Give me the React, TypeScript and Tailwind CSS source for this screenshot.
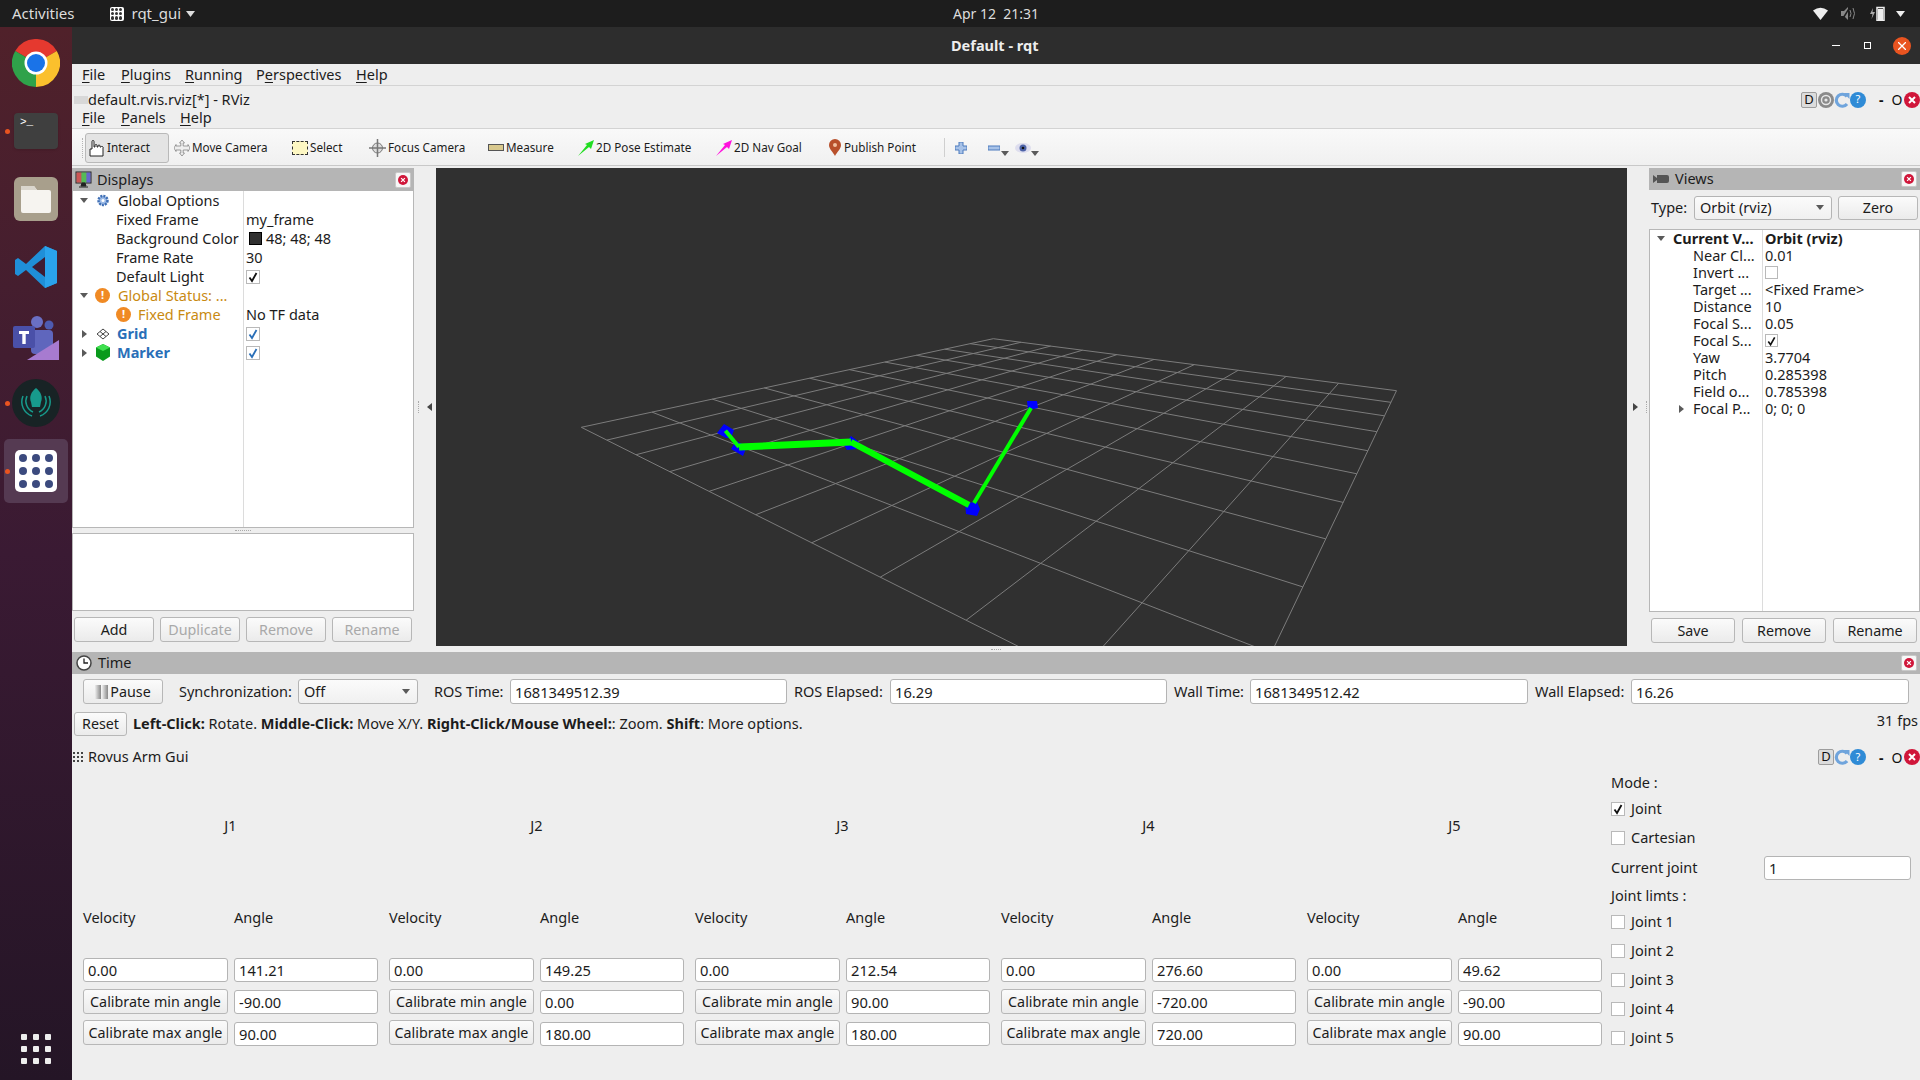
import type { ReactNode } from "react";

const font = "font-['Noto_Sans','Liberation_Sans',sans-serif]";

// Square-to-quad projection for the rviz grid (corners read off the screenshot)
const quad = [
	[581.3, 427.3],
	[993.3, 338.7],
	[1396.5, 390.7],
	[1225, 750],
];

function project(u: number, v: number): [number, number] {
	const [[x0, y0], [x1, y1], [x2, y2], [x3, y3]] = quad;
	const dx1 = x1 - x2;
	const dx2 = x3 - x2;
	const sx = x0 - x1 + x2 - x3;
	const dy1 = y1 - y2;
	const dy2 = y3 - y2;
	const sy = y0 - y1 + y2 - y3;
	const den = dx1 * dy2 - dx2 * dy1;
	const g = (sx * dy2 - dx2 * sy) / den;
	const h = (dx1 * sy - sx * dy1) / den;
	const a = x1 - x0 + g * x1;
	const b = x3 - x0 + h * x3;
	const d = y1 - y0 + g * y1;
	const e = y3 - y0 + h * y3;
	const w = g * u + h * v + 1;
	return [(a * u + b * v + x0) / w, (d * u + e * v + y0) / w];
}

function gridLines() {
	const lines: [number, number, number, number][] = [];
	for (let i = 0; i <= 10; i++) {
		const t = i / 10;
		lines.push([...project(t, 0), ...project(t, 1)]);
		lines.push([...project(0, t), ...project(1, t)]);
	}
	return lines;
}

const markers = [
	"717,433 724,424 734,430 731,438 726,438",
	"731,449 736,441 747,446 743,456",
	"844,445 851,436 859,442 856,449 847,450",
	"965,503 977,502 980,509 977,516 966,514",
	"1027,401 1037,401 1038,408 1028,410",
];

function Scene() {
	return (
		<svg className="h-full w-full" viewBox="436 168 1191 478">
			{gridLines().map(([x1, y1, x2, y2]) => (
				<line
					key={`${x1}-${y1}`}
					stroke="#7c7c7c"
					strokeWidth="1"
					x1={x1}
					x2={x2}
					y1={y1}
					y2={y2}
				/>
			))}
			{markers.map((points) => (
				<polygon fill="#0000ff" key={points} points={points} />
			))}
			<g stroke="#00ff00">
				<line strokeWidth="4" x1="725.4" x2="739" y1="430.7" y2="447" />
				<line strokeWidth="7" x1="739" x2="851" y1="447" y2="442" />
				<line strokeWidth="6" x1="851" x2="969" y1="442" y2="505" />
				<line strokeWidth="4" x1="974" x2="1031" y1="503" y2="408" />
			</g>
		</svg>
	);
}

function CloseDot({ size = "h-[16px] w-[16px]" }: { size?: string }) {
	return (
		<svg className={size} viewBox="0 0 16 16">
			<circle cx="8" cy="8" fill="#d0163a" r="8" />
			<path d="M5 5l6 6M11 5l-6 6" stroke="#fff" strokeWidth="2" />
		</svg>
	);
}

function PanelClose() {
	return (
		<span className="flex h-[16px] w-[16px] items-center justify-center rounded-[2px] border border-[#c9c9c9] bg-[#f7f7f7]">
			<CloseDot size="h-[10px] w-[10px]" />
		</span>
	);
}

function Triangle({ dir, color = "#5a5a5a" }: { dir: "down" | "right" | "left"; color?: string }) {
	const d = { down: "M0 1h8L4 6z", right: "M2 0l5 4-5 4z", left: "M7 0L2 4l5 4z" }[dir];
	return (
		<svg className="h-[8px] w-[8px] shrink-0" viewBox="0 0 8 8">
			<path d={d} fill={color} />
		</svg>
	);
}

function Check({ checked, color = "#111", box = "h-[14px] w-[14px]" }: { checked?: boolean; color?: string; box?: string }) {
	return (
		<span className={`flex shrink-0 items-center justify-center border border-[#b9b9b9] bg-white ${box}`}>
			{checked && (
				<svg className="h-[12px] w-[12px]" viewBox="0 0 12 12">
					<path d="M2.5 6.5L5 10l4.5-8" fill="none" stroke={color} strokeWidth="1.8" />
				</svg>
			)}
		</span>
	);
}

function Btn({ children, className = "", muted }: { children: ReactNode; className?: string; muted?: boolean }) {
	return (
		<button
			className={`flex items-center justify-center rounded-[3px] border border-[#b7b7b7] bg-gradient-to-b from-[#fbfbfb] to-[#ebebeb] text-[14.3px] ${muted ? "text-[#a9a9a9]" : "text-[#1c1c1c]"} ${className}`}
			type="button"
		>
			{children}
		</button>
	);
}

function Field({ value, className = "" }: { value: string; className?: string }) {
	return (
		<input
			className={`rounded-[3px] border border-[#b4b4b4] bg-white px-[4px] text-[14.7px] text-[#1c1c1c] outline-none ${font} ${className}`}
			readOnly
			type="text"
			value={value}
		/>
	);
}

function Combo({ value, className = "" }: { value: string; className?: string }) {
	return (
		<div className={`flex items-center justify-between rounded-[3px] border border-[#b4b4b4] bg-gradient-to-b from-[#fbfbfb] to-[#f0f0f0] pr-[7px] pl-[5px] ${className}`}>
			<span>{value}</span>
			<Triangle dir="down" />
		</div>
	);
}

function Under({ pre = "", u, post }: { pre?: string; u: string; post: string }) {
	return (
		<span>
			{pre}
			<span className="underline underline-offset-2">{u}</span>
			{post}
		</span>
	);
}

function HelpDot() {
	return (
		<span className="flex h-[16px] w-[16px] items-center justify-center rounded-full bg-[#2f8bd6] text-[11px] text-white">?</span>
	);
}

function RefreshDot() {
	return (
		<svg className="h-[16px] w-[16px]" viewBox="0 0 16 16">
			<path d="M13 4.5A6 6 0 1 0 13 12" fill="none" stroke="#6fa4dc" strokeWidth="3.2" />
			<path d="M9.5 1h6v6z" fill="#6fa4dc" />
		</svg>
	);
}

function WindowControls({ gear }: { gear?: boolean }) {
	return (
		<div className="flex items-center">
			<span className="flex h-[16px] w-[16px] items-center justify-center rounded-[2px] border border-[#9d9d9d] bg-[#dcdcdc] text-[13px] text-[#111]">D</span>
			{gear && (
				<svg className="ml-[1px] h-[16px] w-[16px]" viewBox="0 0 16 16">
					<circle cx="8" cy="8" fill="#8a8a8a" r="8" />
					<circle cx="8" cy="8" fill="none" r="4.5" stroke="#e8e8e8" strokeWidth="1.4" />
					<circle cx="8" cy="8" fill="#e8e8e8" r="1.6" />
				</svg>
			)}
			<RefreshDot />
			<HelpDot />
			<span className="ml-[13px] w-[10px] text-[14px] font-bold text-[#111]">-</span>
			<span className="ml-[2px] w-[12px] text-center text-[14px] text-[#111]">O</span>
			<CloseDot size="ml-[1px] h-[16px] w-[16px]" />
		</div>
	);
}

function ToolItem({ icon, label, className }: { icon: ReactNode; label: string; className: string }) {
	return (
		<div className={`flex h-[30px] shrink-0 items-center ${className}`}>
			{icon}
			<span className="ml-[2px] text-[11.7px]">{label}</span>
		</div>
	);
}

function Arrow({ color }: { color: string }) {
	return (
		<svg className="h-[16px] w-[16px]" viewBox="0 0 16 16">
			<path d="M0 16L9 5 7 4l9-4-3 9-2-2z" fill={color} />
		</svg>
	);
}

function Toolbar() {
	return (
		<div className="flex h-[37px] items-center border-b border-[#c8c8c8] bg-gradient-to-b from-[#f9f9f9] to-[#f0f0f0] pt-[1px] pl-[10px] text-[#1c1c1c]">
			<span className="mt-[1px] h-[20px] w-[3px] border-l border-dotted border-[#b5b5b5]" />
			<ToolItem
				className="w-[84px] rounded-[3px] border border-[#b9b9b9] bg-[#e4e4e4] pl-[3px]"
				icon={
					<svg className="h-[18px] w-[16px]" viewBox="0 0 16 18">
						<path d="M1 17V10h2V2.5a1 1 0 0 1 2 0V8h1V6.5a1 1 0 0 1 2 0V8h1V7a1 1 0 0 1 2 0v1h1a1 1 0 0 1 2 1v8z" fill="#fff" stroke="#222" />
					</svg>
				}
				label="Interact"
			/>
			<ToolItem
				className="ml-[3px] w-[116px] pl-[2px]"
				icon={
					<svg className="h-[18px] w-[16px]" viewBox="0 0 16 18">
						<path d="M8 1l2.5 3H9.2v3H14V5.5L16 9l-2 3.5V11H9.2v3h1.3L8 17l-2.5-3h1.3v-3H2v1.500L0 9l2-3.500V7h4.800V4H5.500z" fill="#eee" stroke="#777" strokeWidth=".7" />
					</svg>
				}
				label="Move Camera"
			/>
			<ToolItem
				className="w-[77px] pl-[4px]"
				icon={<span className="h-[14px] w-[16px] border border-dashed border-[#333] bg-[#fdf7c3]" />}
				label="Select"
			/>
			<ToolItem
				className="w-[119px] pl-[4px]"
				icon={
					<svg className="h-[18px] w-[17px]" viewBox="0 0 17 18">
						<circle cx="8.500" cy="9" fill="#ddd" r="5" stroke="#777" />
						<path d="M8.500 0v18M0 9h17" stroke="#777" strokeWidth="1.500" />
					</svg>
				}
				label="Focus Camera"
			/>
			<ToolItem
				className="w-[90px] pl-[4px]"
				icon={<span className="flex h-[7px] w-[16px] border border-[#555] bg-[#d9c98e]" />}
				label="Measure"
			/>
			<ToolItem className="w-[138px] pl-[4px]" icon={<Arrow color="#22dd22" />} label="2D Pose Estimate" />
			<ToolItem className="w-[112px] pl-[4px]" icon={<Arrow color="#ff11dd" />} label="2D Nav Goal" />
			<ToolItem
				className="w-[100px] pl-[4px]"
				icon={
					<svg className="h-[17px] w-[14px]" viewBox="0 0 14 17">
						<path d="M7 0a6 6 0 0 1 6 6c0 4-4 7-6 11-2-4-6-7-6-11a6 6 0 0 1 6-6z" fill="#b8502b" />
						<circle cx="7" cy="6" fill="#f0c0a0" r="2" />
					</svg>
				}
				label="Publish Point"
			/>
			<span className="ml-[20px] h-[19px] w-[1px] bg-[#cfcfcf]" />
			<svg className="ml-[10px] h-[12px] w-[12px]" viewBox="0 0 12 12">
				<path d="M4 0h4v4h4v4H8v4H4V8H0V4h4z" fill="#a7c2e8" stroke="#4d7bbd" />
			</svg>
			<svg className="ml-[21px] h-[12px] w-[12px]" viewBox="0 0 12 12">
				<rect fill="#a7c2e8" height="4" stroke="#4d7bbd" width="12" y="4" />
			</svg>
			<span className="mt-[12px] ml-[1px]">
				<Triangle dir="down" />
			</span>
			<svg className="ml-[6px] h-[12px] w-[16px]" viewBox="0 0 16 12">
				<ellipse cx="8" cy="6" fill="#dde" rx="8" ry="5" />
				<circle cx="8" cy="6" fill="#4d63a8" r="3.500" />
				<circle cx="8" cy="6" fill="#111" r="1.300" />
			</svg>
			<span className="mt-[12px]">
				<Triangle dir="down" />
			</span>
		</div>
	);
}

function PanelHeader({ icon, title, className = "" }: { icon: ReactNode; title: string; className?: string }) {
	return (
		<div className={`flex items-center justify-between bg-[#b5b5b5] pr-[3px] ${className}`}>
			<div className="flex items-center">
				{icon}
				<span>{title}</span>
			</div>
			<PanelClose />
		</div>
	);
}

function DisplayRow({ children, className = "" }: { children: ReactNode; className?: string }) {
	return <div className={`flex h-[19px] items-center whitespace-nowrap ${className}`}>{children}</div>;
}

function WarnIcon({ className = "" }: { className?: string }) {
	return (
		<span className={`flex h-[15px] w-[15px] shrink-0 items-center justify-center rounded-full bg-[#f08a24] text-[11px] font-bold text-white ${className}`}>!</span>
	);
}

function Displays() {
	const top = "pl-[7px]";
	return (
		<div className="flex w-[342px] shrink-0 flex-col">
			<PanelHeader
				className="h-[23px]"
				icon={
					<svg className="mr-[5px] ml-[3px] h-[17px] w-[17px]" viewBox="0 0 17 17">
						<rect fill="#7f7f7f" height="11" stroke="#222" width="15" x="1" y="1" />
						<rect fill="#c55" height="10" width="5" x="1.500" y="1.500" />
						<rect fill="#5b5" height="10" width="5" x="6.500" y="1.500" />
						<rect fill="#66c" height="10" width="4" x="11.500" y="1.500" />
						<path d="M6 15h5l-1-3H7zM4 16h9" fill="#222" stroke="#222" />
					</svg>
				}
				title="Displays"
			/>
			<div className="flex h-[337px] border-x border-b border-[#b7b7b7] bg-white">
				<div className="w-[171px] border-r border-[#dcdcdc]">
					<DisplayRow className={top}>
						<Triangle dir="down" />
						<svg className="mr-[8px] ml-[8px] h-[15px] w-[14px]" viewBox="0 0 14 15">
							<circle cx="7" cy="7.500" fill="#9dbbe6" r="4.500" stroke="#3f6fb5" strokeDasharray="2 1" strokeWidth="2.500" />
							<circle cx="7" cy="7.500" fill="#fff" r="1.500" />
						</svg>
						Global Options
					</DisplayRow>
					<DisplayRow className="pl-[43px]">Fixed Frame</DisplayRow>
					<DisplayRow className="pl-[43px]">Background Color</DisplayRow>
					<DisplayRow className="pl-[43px]">Frame Rate</DisplayRow>
					<DisplayRow className="pl-[43px]">Default Light</DisplayRow>
					<DisplayRow className={`${top} text-[#c98a12]`}>
						<Triangle dir="down" />
						<WarnIcon className="mr-[8px] ml-[7px]" />
						Global Status: ...
					</DisplayRow>
					<DisplayRow className="pl-[43px] text-[#c98a12]">
						<WarnIcon className="mr-[7px]" />
						Fixed Frame
					</DisplayRow>
					<DisplayRow className={`${top} font-bold text-[#2a6fb8]`}>
						<Triangle dir="right" />
						<svg className="mr-[7px] ml-[8px] h-[12px] w-[14px]" viewBox="0 0 14 12">
							<path d="M7 1l6 5-6 5-6-5zM4 3.500l6 5M10 3.500l-6 5" fill="none" stroke="#444" />
						</svg>
						Grid
					</DisplayRow>
					<DisplayRow className={`${top} font-bold text-[#2a6fb8]`}>
						<Triangle dir="right" />
						<svg className="mr-[7px] ml-[8px] h-[17px] w-[14px]" viewBox="0 0 14 17">
							<path d="M7 0l7 3.500v9L7 17l-7-4.500v-9z" fill="#0a9a1c" />
							<path d="M7 0l7 3.500L7 7 0 3.500z" fill="#3fe04f" />
						</svg>
						Marker
					</DisplayRow>
				</div>
				<div className="flex-1 pl-[2px]">
					<DisplayRow> </DisplayRow>
					<DisplayRow>my_frame</DisplayRow>
					<DisplayRow>
						<span className="mr-[4px] ml-[3px] h-[13px] w-[13px] border border-black bg-[#303030]" />
						48; 48; 48
					</DisplayRow>
					<DisplayRow>30</DisplayRow>
					<DisplayRow>
						<Check checked />
					</DisplayRow>
					<DisplayRow> </DisplayRow>
					<DisplayRow>No TF data</DisplayRow>
					<DisplayRow>
						<Check checked color="#2a6fb8" />
					</DisplayRow>
					<DisplayRow>
						<Check checked color="#2a6fb8" />
					</DisplayRow>
				</div>
			</div>
			<div className="flex h-[5px] items-center justify-center">
				<span className="h-0 w-[16px] border-t border-dotted border-[#aaa]" />
			</div>
			<div className="h-[78px] border border-[#b7b7b7] bg-white" />
			<div className="mt-[6px] flex gap-[6px] pl-[2px]">
				<Btn className="h-[25px] w-[80px]">Add</Btn>
				<Btn className="h-[25px] w-[80px]" muted>Duplicate</Btn>
				<Btn className="h-[25px] w-[80px]" muted>Remove</Btn>
				<Btn className="h-[25px] w-[80px]" muted>Rename</Btn>
			</div>
		</div>
	);
}

const viewRows: { label: string; value?: string; check?: boolean; checked?: boolean; arrow?: boolean }[] = [
	{ label: "Near Cl...", value: "0.01" },
	{ label: "Invert ...", check: true },
	{ label: "Target ...", value: "<Fixed Frame>" },
	{ label: "Distance", value: "10" },
	{ label: "Focal S...", value: "0.05" },
	{ label: "Focal S...", check: true, checked: true },
	{ label: "Yaw", value: "3.7704" },
	{ label: "Pitch", value: "0.285398" },
	{ label: "Field o...", value: "0.785398" },
	{ label: "Focal P...", value: "0; 0; 0", arrow: true },
];

function Views() {
	return (
		<div className="flex w-[271px] shrink-0 flex-col">
			<PanelHeader
				className="h-[22px]"
				icon={
					<svg className="mr-[6px] ml-[4px] h-[10px] w-[16px]" viewBox="0 0 16 10">
						<path d="M0 1l4 3V1h10a2 2 0 0 1 2 2v4a2 2 0 0 1-2 2H4V6L0 9z" fill="#555" />
					</svg>
				}
				title="Views"
			/>
			<div className="mt-[6px] flex h-[24px] items-center pl-[2px]">
				<span className="w-[43px]">Type:</span>
				<Combo className="h-[24px] w-[138px]" value="Orbit (rviz)" />
				<Btn className="ml-[6px] h-[24px] w-[80px]">Zero</Btn>
			</div>
			<div className="mt-[9px] flex h-[383px] border border-[#b7b7b7] bg-white">
				<div className="w-[113px] border-r border-[#dcdcdc] whitespace-nowrap">
					<div className="flex h-[17px] items-center pl-[7px] font-bold">
						<Triangle dir="down" />
						<span className="ml-[8px]">Current V...</span>
					</div>
					{viewRows.map((row, i) => (
						<div className="flex h-[17px] items-center pl-[43px]" key={`${row.label}-${i}`}>
							{row.arrow && (
								<span className="-ml-[16px] w-[16px]">
									<Triangle dir="right" />
								</span>
							)}
							{row.label}
						</div>
					))}
				</div>
				<div className="flex-1 pl-[2px]">
					<div className="flex h-[17px] items-center font-bold">Orbit (rviz)</div>
					{viewRows.map((row, i) => (
						<div className="flex h-[17px] items-center" key={`${row.label}-v-${i}`}>
							{row.check ? <Check box="h-[13px] w-[13px]" checked={row.checked} /> : row.value}
						</div>
					))}
				</div>
			</div>
			<div className="mt-[6px] flex gap-[7px] pl-[2px]">
				<Btn className="h-[25px] w-[84px]">Save</Btn>
				<Btn className="h-[25px] w-[84px]">Remove</Btn>
				<Btn className="h-[25px] w-[84px]">Rename</Btn>
			</div>
		</div>
	);
}

function TimePanel() {
	return (
		<div className="flex flex-col">
			<PanelHeader
				className="h-[22px]"
				icon={
					<svg className="mr-[6px] ml-[4px] h-[16px] w-[16px]" viewBox="0 0 16 16">
						<circle cx="8" cy="8" fill="#fff" r="7" stroke="#444" strokeWidth="1.500" />
						<path d="M8 3.500V8h4" fill="none" stroke="#222" strokeWidth="1.300" />
					</svg>
				}
				title="Time"
			/>
			<div className="mt-[5px] flex h-[25px] items-center pl-[11px] whitespace-nowrap">
				<Btn className="h-[25px] w-[80px]">
					<span className="mr-[2px] flex gap-[1px]">
						<span className="h-[14px] w-[6px] bg-gradient-to-r from-[#eee] to-[#888]" />
						<span className="h-[14px] w-[6px] bg-gradient-to-r from-[#eee] to-[#888]" />
					</span>
					Pause
				</Btn>
				<span className="ml-[16px] w-[119px]">Synchronization:</span>
				<Combo className="h-[25px] w-[120px]" value="Off" />
				<span className="ml-[16px] w-[76px]">ROS Time:</span>
				<Field className="h-[25px] w-[277px]" value="1681349512.39" />
				<span className="ml-[7px] w-[96px]">ROS Elapsed:</span>
				<Field className="h-[25px] w-[277px]" value="16.29" />
				<span className="ml-[7px] w-[76px]">Wall Time:</span>
				<Field className="h-[25px] w-[278px]" value="1681349512.42" />
				<span className="ml-[7px] w-[96px]">Wall Elapsed:</span>
				<Field className="h-[25px] w-[278px]" value="16.26" />
			</div>
			<div className="mt-[8px] flex h-[24px] items-center pl-[2px] whitespace-nowrap">
				<Btn className="h-[24px] w-[53px]">Reset</Btn>
				<span className="ml-[6px]">
					<b>Left-Click:</b> Rotate. <b>Middle-Click:</b> Move X/Y. <b>Right-Click/Mouse Wheel:</b>: Zoom. <b>Shift</b>: More options.
				</span>
				<span className="-mt-[6px] ml-auto pr-[2px]">31 fps</span>
			</div>
		</div>
	);
}

const joints = [
	{ name: "J1", angle: "141.21", min: "-90.00", max: "90.00" },
	{ name: "J2", angle: "149.25", min: "0.00", max: "180.00" },
	{ name: "J3", angle: "212.54", min: "90.00", max: "180.00" },
	{ name: "J4", angle: "276.60", min: "-720.00", max: "720.00" },
	{ name: "J5", angle: "49.62", min: "-90.00", max: "90.00" },
];

function JointColumn({ name, angle, min, max }: (typeof joints)[number]) {
	return (
		<div className="flex w-[295px] shrink-0 flex-col">
			<div className="mt-[49px] flex h-[20px] items-center justify-center">{name}</div>
			<div className="mt-[71px] grid h-[20px] grid-cols-[145px_144px] items-center gap-x-[6px]">
				<span>Velocity</span>
				<span>Angle</span>
			</div>
			<div className="mt-[31px] grid grid-cols-[145px_144px] gap-x-[6px]">
				<Field className="h-[24px] w-full" value="0.00" />
				<Field className="h-[24px] w-full" value={angle} />
			</div>
			<div className="mt-[7px] grid grid-cols-[145px_144px] gap-x-[6px]">
				<Btn className="h-[25px] w-full whitespace-nowrap">Calibrate min angle</Btn>
				<Field className="mt-[1px] h-[24px] w-full" value={min} />
			</div>
			<div className="mt-[6px] grid grid-cols-[145px_144px] gap-x-[6px]">
				<Btn className="h-[25px] w-full whitespace-nowrap">Calibrate max angle</Btn>
				<Field className="mt-[2px] h-[24px] w-full" value={max} />
			</div>
		</div>
	);
}

function CheckRow({ label, checked, className }: { label: string; checked?: boolean; className: string }) {
	return (
		<div className={`flex h-[20px] items-center gap-[6px] ${className}`}>
			<Check checked={checked} />
			{label}
		</div>
	);
}

function ArmGui() {
	return (
		<div className="flex min-h-0 flex-1 flex-col">
			<div className="flex h-[20px] items-center justify-between">
				<div className="flex items-center">
					<span className="mr-[1px] ml-[1px] grid grid-cols-3 gap-[2px]">
						{[0, 1, 2, 3, 4, 5, 6, 7, 8].map((n) => (
							<span className="h-[2px] w-[2px] bg-[#444]" key={n} />
						))}
					</span>
					<span className="ml-[4px]">Rovus Arm Gui</span>
				</div>
				<WindowControls />
			</div>
			<div className="flex pl-[11px]">
				<div className="flex gap-[11px]">
					{joints.map((joint) => (
						<JointColumn key={joint.name} {...joint} />
					))}
				</div>
				<div className="ml-[9px] flex w-[300px] flex-col">
					<div className="mt-[6px] flex h-[20px] items-center">Mode :</div>
					<CheckRow checked className="mt-[6px]" label="Joint" />
					<CheckRow className="mt-[9px]" label="Cartesian" />
					<div className="mt-[8px] flex h-[24px] items-center justify-between">
						<span>Current joint</span>
						<Field className="h-[24px] w-[147px]" value="1" />
					</div>
					<div className="mt-[6px] flex h-[20px] items-center">Joint limts :</div>
					<CheckRow className="mt-[6px]" label="Joint 1" />
					<CheckRow className="mt-[9px]" label="Joint 2" />
					<CheckRow className="mt-[9px]" label="Joint 3" />
					<CheckRow className="mt-[9px]" label="Joint 4" />
					<CheckRow className="mt-[9px]" label="Joint 5" />
				</div>
			</div>
		</div>
	);
}

function TopBar() {
	return (
		<div className="relative flex h-[27px] shrink-0 items-center bg-[#1d1d1d] pl-[12px] text-[15px] text-[#dcdcdc]">
			<span>Activities</span>
			<span className="ml-[35px] grid h-[14px] w-[14px] grid-cols-3 gap-[1px] rounded-[2px] bg-white p-[1px]">
				{[0, 1, 2, 3, 4, 5, 6, 7, 8].map((n) => (
					<span className="rounded-full bg-[#333]" key={n} />
				))}
			</span>
			<span className="ml-[8px]">rqt_gui</span>
			<svg className="ml-[5px] h-[6px] w-[9px]" viewBox="0 0 9 6">
				<path d="M0 0h9L4.500 6z" fill="#ddd" />
			</svg>
			<span className="absolute left-[953px] text-[14px] whitespace-pre">Apr 12  21:31</span>
			<div className="ml-auto flex items-center pr-[15px]">
				<svg className="h-[13px] w-[15px]" viewBox="0 0 15 13">
					<path d="M0 3.500Q7.500-2 15 3.500L7.500 13z" fill="#eee" />
				</svg>
				<svg className="ml-[13px] h-[13px] w-[15px]" viewBox="0 0 15 13">
					<path d="M0 4h3l4-4v13l-4-4H0z" fill="#888" />
					<path d="M9 3q2 3.500 0 7M12 1q3 5.500 0 11" fill="none" stroke="#888" />
					<path d="M1 13L9 0" stroke="#1d1d1d" strokeWidth="1.500" />
				</svg>
				<svg className="ml-[14px] h-[15px] w-[15px]" viewBox="0 0 15 15">
					<path d="M3 2L0 8h2.500L1.500 13l3.500-7H2.500z" fill="#aaa" />
					<rect fill="#1d1d1d" height="13" stroke="#eee" strokeWidth="1.500" width="7" x="7" y="1.500" />
					<rect fill="#eee" height="11" width="5" x="8" y="3" />
				</svg>
				<svg className="ml-[11px] h-[6px] w-[9px]" viewBox="0 0 9 6">
					<path d="M0 0h9L4.500 6z" fill="#eee" />
				</svg>
			</div>
		</div>
	);
}

function Dock() {
	return (
		<div className="relative flex w-[72px] shrink-0 flex-col items-center bg-gradient-to-b from-[#50212a] via-[#3a1a33] to-[#241526]">
			<svg className="mt-[12px] h-[48px] w-[48px]" viewBox="0 0 48 48">
				<path d="M24 24L44.800 12A24 24 0 0 0 3.200 12z" fill="#e5392f" />
				<path d="M24 24L3.200 12A24 24 0 0 0 24 48z" fill="#2fa24a" />
				<path d="M24 24L24 48A24 24 0 0 0 44.800 12z" fill="#fbc02d" />
				<circle cx="24" cy="24" fill="#fff" r="11.500" />
				<circle cx="24" cy="24" fill="#1a73e8" r="9" />
			</svg>
			<div className="mt-[26px] h-[36px] w-[44px] rounded-[4px] bg-[#3f3f3f] pt-[3px] pl-[6px] font-mono text-[11px] leading-[12px] text-white shadow">
				&gt;_
			</div>
			<div className="mt-[28px] flex h-[44px] w-[44px] items-center justify-center rounded-[6px] bg-[#a89f8c]">
				<svg className="h-[32px] w-[32px]" viewBox="0 0 32 32">
					<path d="M1 3h13l3 4h12a2 2 0 0 1 2 2v19a2 2 0 0 1-2 2H3a2 2 0 0 1-2-2z" fill="#f6f4f0" />
					<path d="M1 3h13l3 4H1z" fill="#dad6cd" />
				</svg>
			</div>
			<svg className="mt-[25px] h-[42px] w-[42px]" viewBox="0 0 42 42">
				<path d="M30 0l12 5v32l-12 5-19-18-8 6-3-2V14l3-2 8 6z" fill="#1f8fd8" />
				<path d="M30 11L17 21l13 10z" fill="#3f1c33" />
				<path d="M30 0l12 5v32l-12 5z" fill="#2aa3ec" />
			</svg>
			<svg className="mt-[28px] h-[44px] w-[46px]" viewBox="0 0 46 44">
				<circle cx="24" cy="6" fill="#6a6fc4" r="6" />
				<circle cx="36" cy="9" fill="#4e5bb0" r="4.500" />
				<rect fill="#5f66bd" height="24" rx="4" width="22" x="18" y="14" />
				<rect fill="#4a50a8" height="22" rx="2" width="22" x="0" y="10" />
				<path d="M6 15h10v3h-3.300v10h-3.400V18H6z" fill="#fff" />
				<path d="M14 44L46 24v20z" fill="#a77bd0" />
			</svg>
			<svg className="mt-[19px] h-[48px] w-[48px]" viewBox="0 0 48 48">
				<circle cx="24" cy="24" fill="#182325" r="24" />
				<path d="M24 9c5 4 7 9 5 14l-1 5h-8l-1-5c-2-5 0-10 5-14z" fill="#179a8c" />
				<path d="M11 17a15 15 0 0 0 9 20M37 17a15 15 0 0 1-9 20M15 17a12 12 0 0 0 6 16M33 17a12 12 0 0 1-6 16" fill="none" stroke="#179a8c" strokeWidth="1.500" />
			</svg>
			<div className="mt-[12px] flex h-[64px] w-[64px] items-center justify-center rounded-[5px] bg-[#553a52]">
				<div className="grid h-[42px] w-[42px] grid-cols-3 place-items-center rounded-[5px] bg-white p-[2px]">
					{[0, 1, 2, 3, 4, 5, 6, 7, 8].map((n) => (
						<span className="h-[8px] w-[8px] rounded-full bg-[#3b4a7e]" key={n} />
					))}
				</div>
			</div>
			<span className="absolute top-[102px] left-[5px] h-[5px] w-[5px] rounded-full bg-[#e95420]" />
			<span className="absolute top-[374px] left-[5px] h-[5px] w-[5px] rounded-full bg-[#e95420]" />
			<span className="absolute top-[442px] left-[5px] h-[5px] w-[5px] rounded-full bg-[#e95420]" />
			<div className="mt-auto mb-[16px] grid grid-cols-3 gap-[6px]">
				{[0, 1, 2, 3, 4, 5, 6, 7, 8].map((n) => (
					<span className="h-[6px] w-[6px] rounded-[1px] bg-[#eeeeee]" key={n} />
				))}
			</div>
		</div>
	);
}

export default function App() {
	return (
		<div className={`flex h-[1080px] w-[1920px] flex-col overflow-hidden text-[14.5px] ${font}`}>
			<TopBar />
			<div className="flex min-h-0 flex-1">
				<Dock />
				<main className="flex min-w-0 flex-1 flex-col bg-[#eeeeee] text-[#1c1c1c]">
					<div className="relative flex h-[37px] shrink-0 items-center justify-end bg-[#2d2d2d] pr-[9px] text-[#eee]">
						<span className="absolute left-[879px] font-bold">Default - rqt</span>
						<span className="mr-[24px] h-[1px] w-[8px] bg-white" />
						<span className="mr-[22px] h-[7px] w-[7px] border border-white" />
						<span className="flex h-[18px] w-[18px] items-center justify-center rounded-full bg-[#e95420]">
							<svg className="h-[8px] w-[8px]" viewBox="0 0 8 8">
								<path d="M0 0l8 8M8 0L0 8" stroke="#fff" strokeWidth="1.300" />
							</svg>
						</span>
					</div>
					<div className="flex h-[22px] shrink-0 items-center border-b border-[#d3d3d3] pl-[10px]">
						<span className="w-[39px]"><Under post="ile" u="F" /></span>
						<span className="w-[64px]"><Under post="lugins" u="P" /></span>
						<span className="w-[71px]"><Under post="unning" u="R" /></span>
						<span className="w-[100px]"><Under post="rspectives" pre="P" u="e" /></span>
						<span><Under post="elp" u="H" /></span>
					</div>
					<div className="flex h-[21px] shrink-0 items-center justify-between pt-[6px]">
						<div className="flex items-center">
							<span className="ml-[2px] h-[8px] w-[14px] bg-[#d8d8d8]" />
							<span>default.rvis.rviz[*] - RViz</span>
						</div>
						<WindowControls gear />
					</div>
					<div className="flex h-[22px] shrink-0 items-center border-b border-[#d3d3d3] pl-[10px]">
						<span className="w-[39px]"><Under post="ile" u="F" /></span>
						<span className="w-[59px]"><Under post="anels" u="P" /></span>
						<span><Under post="elp" u="H" /></span>
					</div>
					<Toolbar />
					<div className="mt-[2px] flex h-[478px] shrink-0">
						<Displays />
						<div className="flex w-[22px] shrink-0 items-center justify-end pr-[3px]">
							<span className="mr-[6px] h-[12px] border-l border-dotted border-[#aaa]" />
							<Triangle dir="left" color="#444" />
						</div>
						<div className="w-[1191px] shrink-0 bg-[#303030]">
							<Scene />
						</div>
						<div className="flex w-[22px] shrink-0 items-center justify-between pl-[4px]">
							<Triangle dir="right" color="#444" />
							<span className="mr-[2px] h-[12px] border-l border-dotted border-[#aaa]" />
						</div>
						<Views />
					</div>
					<div className="flex h-[6px] shrink-0 items-center justify-center">
						<span className="w-[10px] border-t border-dotted border-[#aaa]" />
					</div>
					<TimePanel />
					<div className="h-[11px] shrink-0" />
					<ArmGui />
				</main>
			</div>
		</div>
	);
}
